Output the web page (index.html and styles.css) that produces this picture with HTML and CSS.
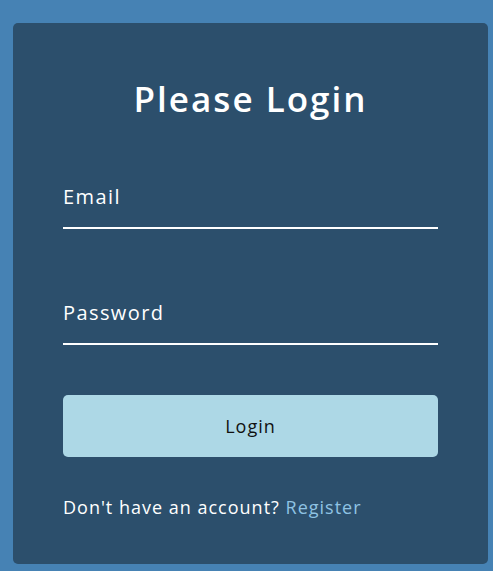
FILE: index.html
```html
<!DOCTYPE html>
<html lang="en">

<head>
    <meta charset="UTF-8">
    <meta name="viewport" content="width=device-width, initial-scale=1.0">
    <title>Login</title>
    <link rel="stylesheet" href="styles.css">
</head>

<body>
    <div class="login-card">
        <h1>Please Login</h1>
        <form id="loginForm">
            <div class="form-field">
                <input type="email" id="email" name="email" placeholder="Email" required>
            </div>
            <div class="form-field">
                <input type="password" id="password" name="password" placeholder="Password" required>
            </div>
            <button type="submit">Login</button>
        </form>
        <p class="register-text">Don't have an account? <a href="#">Register</a></p>
    </div>
</body>

</html>
```

FILE: styles.css
```css
/* Basic Reset */
html,
body {
    margin: 0;
    padding: 0;
    box-sizing: border-box;
}

body {
    height: 571px;
    padding: 23px 5px 0 13px;
    font-family: 'Open Sans', Lato, sans-serif;
    background-color: #4682b4;
    color: #ffffff;
}

/* Card */
.login-card {
    box-sizing: border-box;
    width: 475px;
    height: 541px;
    padding: 56px 50px 0;
    background-color: #2c4f6c;
    border-radius: 5px;
}

.login-card h1 {
    margin: 0 0 46px;
    font-size: 35px;
    font-weight: 600;
    line-height: 40px;
    letter-spacing: 2px;
    text-align: center;
}

/* Form */
form {
    display: flex;
    flex-direction: column;
}

.form-field {
    margin-bottom: 52px;
}

.form-field:nth-child(2) {
    margin-bottom: 50px;
}

input {
    box-sizing: border-box;
    width: 100%;
    height: 64px;
    padding: 0;
    border: none;
    border-bottom: 2px solid #ffffff;
    background: transparent;
    color: #ffffff;
    font-family: inherit;
    font-size: 20px;
    letter-spacing: 1.4px;
    outline: none;
}

input::placeholder {
    color: #ffffff;
    opacity: 1;
}

/* Button */
button {
    height: 62px;
    border: none;
    border-radius: 5px;
    background-color: #add8e6;
    color: #111111;
    font-family: inherit;
    font-size: 18px;
    letter-spacing: 1px;
    cursor: pointer;
}

/* Footer text */
.register-text {
    margin: 38px 0 0;
    font-size: 18px;
    letter-spacing: 1px;
}

.register-text a {
    color: #8fc3e3;
    text-decoration: none;
}
```
